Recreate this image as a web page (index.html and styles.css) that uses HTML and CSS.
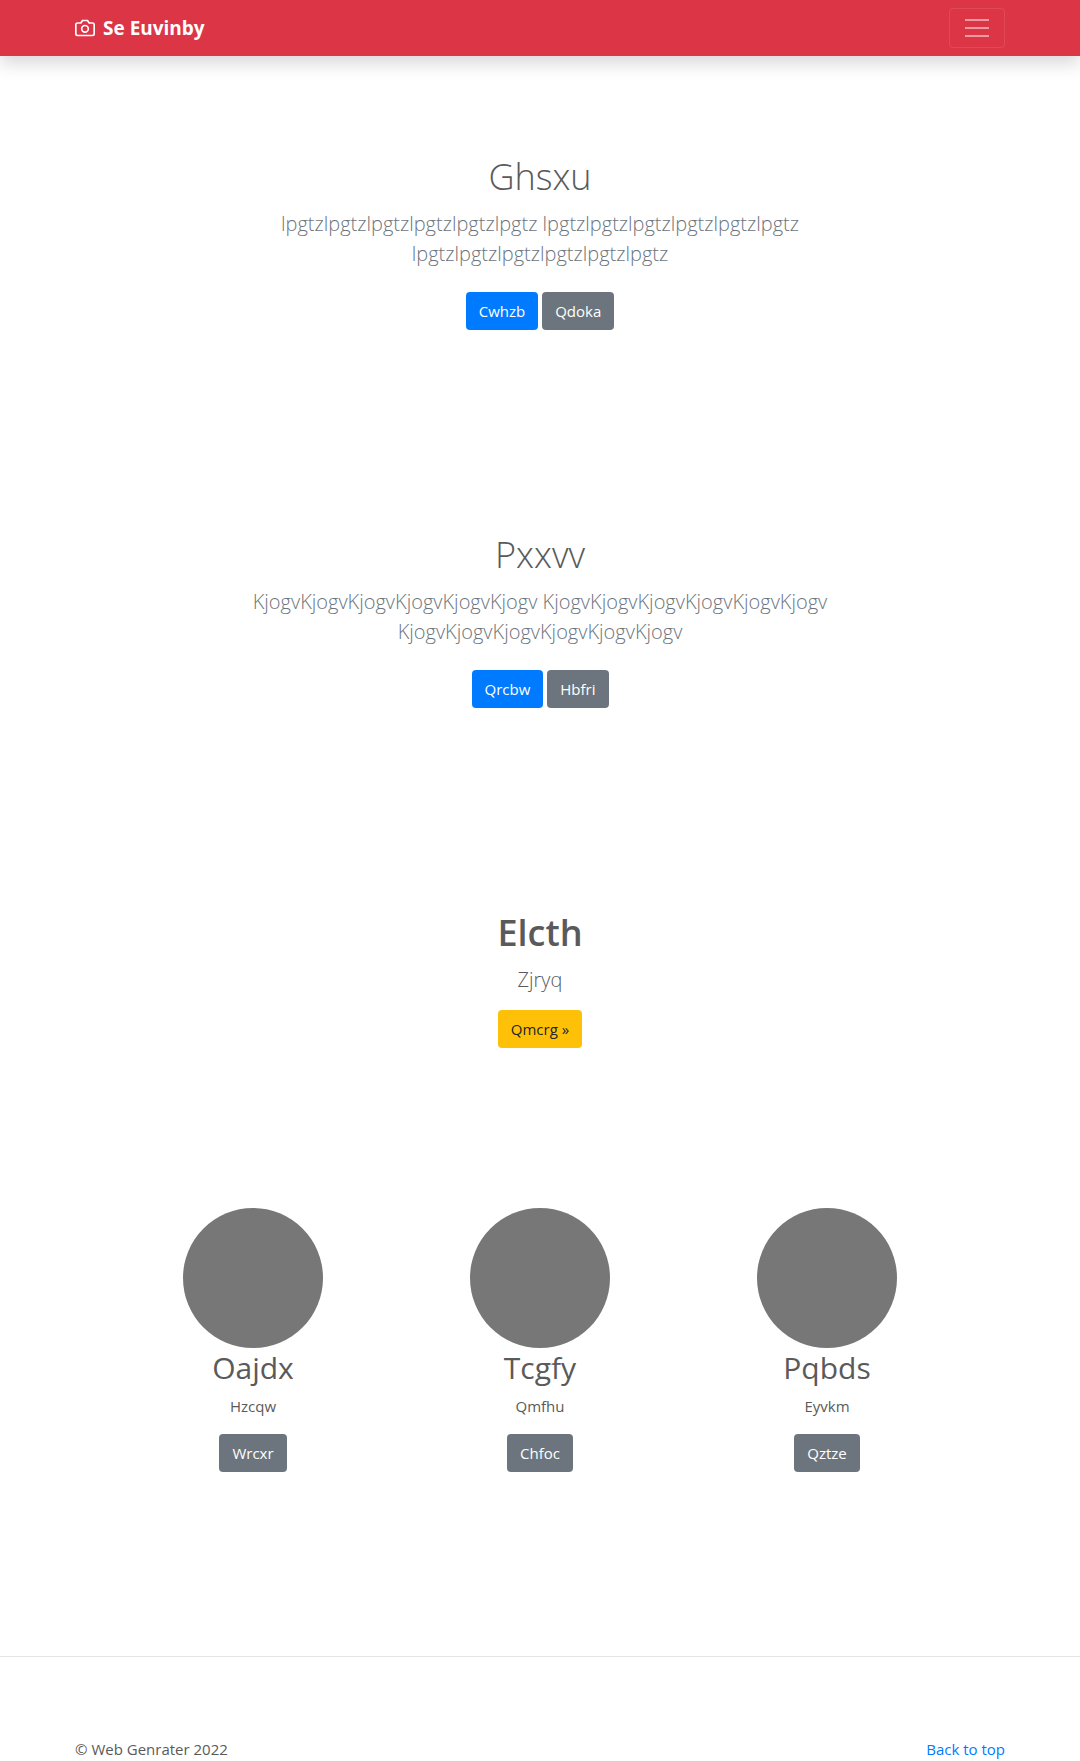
FILE: index.html
```html
<!DOCTYPE html>
<html lang="en">
<head>
  <meta charset="utf-8">
  <meta name="viewport" content="width=device-width, initial-scale=1">
  <title>Se Euvinby</title>
  <link rel="stylesheet" href="styles.css">
</head>
<body id="top">
  <header class="navbar">
    <div class="container navbar-inner">
      <a class="brand" href="#top">
        <svg class="brand-icon" viewBox="0 0 24 24" width="20" height="20" fill="none" stroke="currentColor" stroke-width="2" stroke-linecap="round" stroke-linejoin="round" aria-hidden="true">
          <path d="M23 19a2 2 0 0 1-2 2H3a2 2 0 0 1-2-2V8a2 2 0 0 1 2-2h4l2-3h6l2 3h4a2 2 0 0 1 2 2z"/>
          <circle cx="12" cy="13" r="4"/>
        </svg>
        <strong>Se Euvinby</strong>
      </a>
      <button class="toggler" type="button" aria-label="Toggle navigation">
        <svg viewBox="0 0 30 30" width="30" height="30" fill="none" stroke="currentColor" stroke-width="2" stroke-miterlimit="10" aria-hidden="true">
          <path d="M3 7h24M3 15h24M3 23h24"/>
        </svg>
      </button>
    </div>
  </header>

  <main>
    <section class="hero">
      <h1 class="hero-title">Ghsxu</h1>
      <p class="lead muted">lpgtzlpgtzlpgtzlpgtzlpgtzlpgtz lpgtzlpgtzlpgtzlpgtzlpgtzlpgtz lpgtzlpgtzlpgtzlpgtzlpgtzlpgtz</p>
      <div class="actions">
        <button class="btn btn-primary" type="button">Cwhzb</button>
        <button class="btn btn-secondary" type="button">Qdoka</button>
      </div>
    </section>

    <section class="hero">
      <h1 class="hero-title">Pxxvv</h1>
      <p class="lead muted">KjogvKjogvKjogvKjogvKjogvKjogv KjogvKjogvKjogvKjogvKjogvKjogv KjogvKjogvKjogvKjogvKjogvKjogv</p>
      <div class="actions">
        <button class="btn btn-primary" type="button">Qrcbw</button>
        <button class="btn btn-secondary" type="button">Hbfri</button>
      </div>
    </section>

    <section class="hero callout">
      <h1 class="hero-title strong">Elcth</h1>
      <p class="lead">Zjryq</p>
      <button class="btn btn-warning" type="button">Qmcrg »</button>
    </section>

    <section class="features">
      <article class="feature">
        <div class="avatar"></div>
        <h2>Oajdx</h2>
        <p>Hzcqw</p>
        <button class="btn btn-secondary" type="button">Wrcxr</button>
      </article>
      <article class="feature">
        <div class="avatar"></div>
        <h2>Tcgfy</h2>
        <p>Qmfhu</p>
        <button class="btn btn-secondary" type="button">Chfoc</button>
      </article>
      <article class="feature">
        <div class="avatar"></div>
        <h2>Pqbds</h2>
        <p>Eyvkm</p>
        <button class="btn btn-secondary" type="button">Qztze</button>
      </article>
    </section>
  </main>

  <footer class="footer">
    <div class="container footer-inner">
      <span>© Web Genrater 2022</span>
      <a href="#top">Back to top</a>
    </div>
  </footer>
</body>
</html>
```

FILE: styles.css
```css
*,
*::before,
*::after {
  box-sizing: border-box;
}

body {
  margin: 0;
  background: #fff;
  color: #5a5a5a;
  font-family: "Segoe UI", "Open Sans", "Noto Sans", sans-serif;
  font-size: 15px;
  line-height: 24px;
}

h1,
h2,
p {
  margin: 0;
}

.container {
  width: 100%;
  max-width: 960px;
  margin: 0 auto;
  padding: 0 15px;
}

/* Top bar */
.navbar {
  background: #dc3545;
  box-shadow: 0 8px 16px rgba(0, 0, 0, 0.15);
}

.navbar-inner {
  display: flex;
  align-items: center;
  justify-content: space-between;
  min-height: 56px;
}

.brand {
  display: flex;
  align-items: center;
  gap: 8px;
  color: #fff;
  font-size: 19px;
  line-height: 30px;
  text-decoration: none;
}

.toggler {
  display: flex;
  align-items: center;
  justify-content: center;
  width: 56px;
  height: 40px;
  padding: 0;
  border: 1px solid rgba(255, 255, 255, 0.1);
  border-radius: 4px;
  background: transparent;
  color: rgba(255, 255, 255, 0.5);
}

/* Centred text blocks */
.hero {
  display: flex;
  flex-direction: column;
  align-items: center;
  padding: 96px 15px;
  text-align: center;
}

.hero-title {
  margin-bottom: 7px;
  font-size: 36px;
  font-weight: 300;
  line-height: 50px;
}

.hero-title.strong {
  font-weight: 600;
}

.lead {
  max-width: 610px;
  margin-bottom: 15px;
  font-size: 20px;
  font-weight: 300;
  line-height: 30px;
}

.muted {
  color: #6c757d;
}

.actions {
  display: flex;
  gap: 4px;
  padding: 8px 0;
}

.callout {
  padding-bottom: 160px;
}

/* Buttons */
.btn {
  padding: 6px 12px;
  border: 1px solid transparent;
  border-radius: 4px;
  color: #fff;
  font: inherit;
}

.btn-primary {
  background: #007bff;
}

.btn-secondary {
  background: #6c757d;
}

.btn-warning {
  background: #ffc107;
  color: #212529;
}

/* Three columns */
.features {
  display: grid;
  grid-template-columns: repeat(3, 1fr);
  max-width: 861px;
  margin: 0 auto;
  padding-bottom: 184px;
}

.feature {
  display: flex;
  flex-direction: column;
  align-items: center;
  text-align: center;
}

.avatar {
  width: 140px;
  height: 140px;
  border-radius: 50%;
  background: #777;
}

.feature h2 {
  margin-bottom: 6px;
  font-size: 30px;
  font-weight: 400;
  line-height: 40px;
}

.feature p {
  margin-bottom: 16px;
}

/* Footer */
.footer {
  border-top: 1px solid rgba(0, 0, 0, 0.1);
  padding-top: 80px;
}

.footer-inner {
  display: flex;
  justify-content: space-between;
}

.footer a {
  color: #007bff;
  text-decoration: none;
}
```
